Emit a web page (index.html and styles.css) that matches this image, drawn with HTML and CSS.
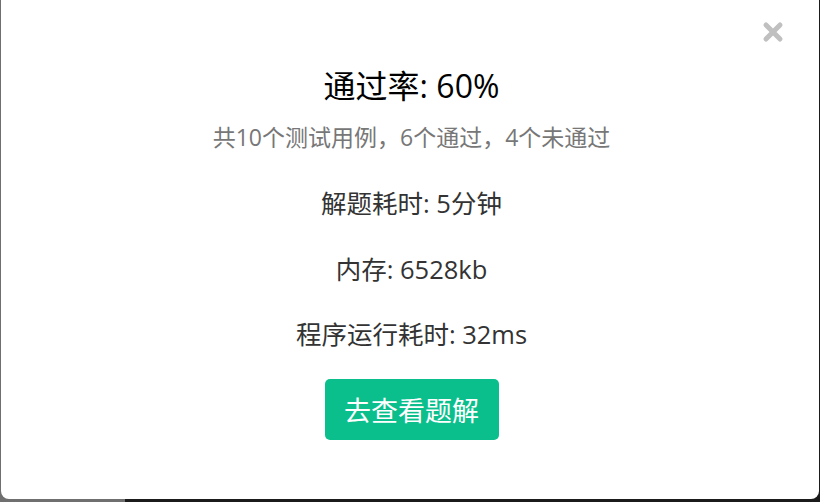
FILE: index.html
```html
<!DOCTYPE html>
<html lang="zh-CN">
<head>
<meta charset="utf-8">
<link rel="stylesheet" href="styles.css">
</head>
<body>
<div class="backdrop">
  <div class="modal">
    <button class="close" aria-label="关闭">
      <svg width="22" height="22" viewBox="0 0 22 22"><path d="M4 4 L18 18 M18 4 L4 18" stroke="#c0c0c0" stroke-width="5" stroke-linecap="round"/></svg>
    </button>
    <div class="content">
      <h2 class="title">通过率: 60%</h2>
      <p class="summary">共10个测试用例，6个通过，4个未通过</p>
      <p class="stat stat-first">解题耗时: 5分钟</p>
      <p class="stat stat-second">内存: 6528kb</p>
      <p class="stat stat-third">程序运行耗时: 32ms</p>
      <button class="solution">去查看题解</button>
    </div>
  </div>
</div>
</body>
</html>
```
FILE: styles.css
```css
* { box-sizing: border-box; }
html, body { margin: 0; padding: 0; }
body {
  width: 820px;
  height: 502px;
  overflow: hidden;
  font-family: "Segoe UI", "Open Sans", "Noto Sans CJK SC", sans-serif;
}
.backdrop {
  position: relative;
  width: 820px;
  height: 502px;
  background: linear-gradient(to right, #6f6f6f 125px, #1b1b1b 125px);
}
.modal {
  position: absolute;
  left: 1px;
  top: -8px;
  width: 818px;
  height: 507px;
  background: #fff;
  border-radius: 8px;
}
.close {
  position: absolute;
  top: 29px;
  right: 35px;
  border: 0;
  background: none;
  padding: 0;
  width: 22px;
  height: 22px;
  cursor: pointer;
}
.close svg { display: block; }
.content {
  display: flex;
  flex-direction: column;
  align-items: center;
  padding-top: 78px;
  padding-left: 3px;
  text-align: center;
}
.title {
  margin: 0;
  font-size: 32px;
  font-weight: 400;
  line-height: 32px;
  color: #000;
}
.summary {
  margin: 22px 0 0;
  font-size: 23px;
  line-height: 26px;
  color: #777;
}
.stat {
  margin: 0;
  font-size: 25.5px;
  line-height: 30px;
  color: #333;
}
.stat-first { margin-top: 38px; }
.stat-second { margin-top: 36px; }
.stat-third { margin-top: 35px; }
.solution {
  margin-top: 30px;
  width: 174px;
  height: 61px;
  border: 0;
  border-radius: 5px;
  background: #0bbf8c;
  color: #fff;
  font-family: inherit;
  font-size: 27px;
  cursor: pointer;
}
```
